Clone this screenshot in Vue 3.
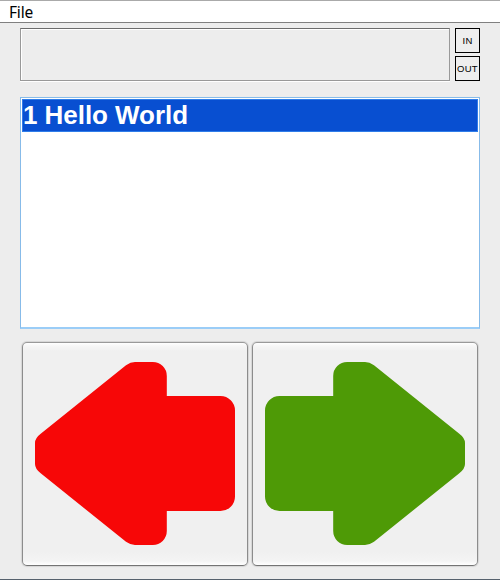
<script setup>
import { ref } from 'vue'

const items = ref(['1 Hello World'])
const selected = ref(0)
const arrow =
  'M0 81Q0 76 6 71.5L91 3.2Q95.500 0 100 0H117.800A14 14 0 0 1 131.800 14V34H185.500A14.500 14.500 0 0 1 200 48.500V134.500A14.500 14.500 0 0 1 185.500 149H131.800V169A14 14 0 0 1 117.800 183H100Q95.500 183 91 179.800L6 111.500Q0 107 0 102Z'
</script>

<template>
  <div class="window">
    <nav class="menu"><span>File</span></nav>
    <main class="content">
      <section class="top">
        <div class="display"></div>
        <div class="zoom">
          <button>IN</button>
          <button>OUT</button>
        </div>
      </section>
      <ul class="list">
        <li
          v-for="(item, i) in items"
          :key="item"
          :class="{ selected: i === selected }"
          @click="selected = i"
        >{{ item }}</li>
      </ul>
      <section class="nav">
        <button class="arrow back" aria-label="Back">
          <svg width="200" height="183" viewBox="0 0 200 183"><path :d="arrow" /></svg>
        </button>
        <button class="arrow next" aria-label="Next">
          <svg width="200" height="183" viewBox="0 0 200 183"><path :d="arrow" transform="translate(200 0) scale(-1 1)" /></svg>
        </button>
      </section>
    </main>
  </div>
</template>

<style>
body { margin: 0; overflow: hidden; }
</style>

<style scoped>
* { box-sizing: border-box; }
.window {
  width: 500px;
  height: 580px;
  background: #ededed;
  border-top: 1px solid #aaa;
  border-bottom: 1px solid #56616d;
  display: flex;
  flex-direction: column;
  font-family: "Liberation Sans", Arial, sans-serif;
  color: #000;
}
.menu {
  height: 22px;
  flex: none;
  background: #fff;
  border-bottom: 1px solid #808080;
  padding: 1px 0 0 9px;
  font: 15.5px/21px "Noto Sans", sans-serif;
  letter-spacing: -0.2px;
}
.content { padding: 5px 20px 0; }
.top { display: flex; gap: 5px; height: 53px; }
.display {
  width: 430px;
  border: 1px solid #999;
  border-top-color: #6c6c6c;
  box-shadow: inset 1px 1px 0 #fff, 0 1px 0 #fff;
}
.zoom { display: flex; flex-direction: column; gap: 3px; }
.zoom button {
  width: 25px;
  height: 25px;
  padding: 0;
  border: 1px solid #000;
  background: #eee;
  color: #000;
  font: 9.5px/23px "Liberation Sans", Arial, sans-serif;
  letter-spacing: 0.3px;
  display: flex;
  justify-content: center;
}
.list {
  list-style: none;
  margin: 16px 0 0;
  padding: 1px;
  height: 232px;
  background: #fff;
  border: 1px solid #87bbe9;
  border-bottom: 2px solid #9bcdf7;
}
.list li {
  height: 33px;
  border: 1px solid transparent;
  font-weight: bold;
  font-size: 26px;
  line-height: 31px;
  letter-spacing: -0.05px;
}
.list li.selected { background: #084fd1; border-color: #2f7de9; color: #fff; }
.nav { display: flex; gap: 4px; margin: 13px 0 0 2px; }
.arrow {
  width: 226px;
  height: 224px;
  padding: 0 0 1px;
  border: 1px solid #8c8c8c;
  border-top-color: #999;
  border-bottom-color: #747474;
  border-radius: 5px;
  background: linear-gradient(#fff 0, #f6f6f6 3px, #f0f0f0 8px, #f0f0f0 209px, #f4f4f4 218px, #fff 222px);
  box-shadow: 0 0 1px 1px rgba(0, 0, 0, 0.1);
  display: flex;
  align-items: center;
  justify-content: center;
}
.arrow svg { display: block; }
.back path { fill: #f70707; }
.next path { fill: #4e9a06; }
</style>
